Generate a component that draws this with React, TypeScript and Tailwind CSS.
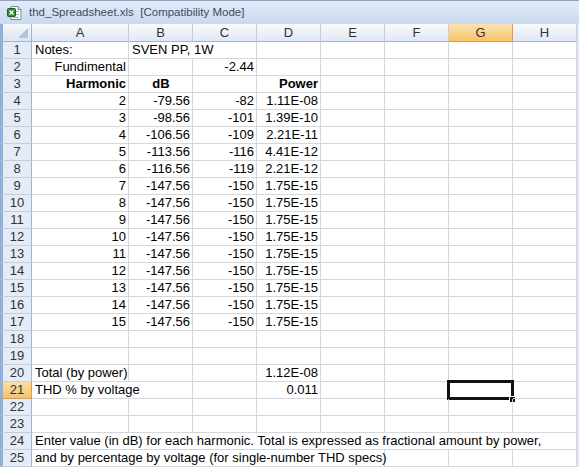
import React from "react";

type Cell = {
  text?: string;
  align?: "left" | "right" | "center";
  bold?: boolean;
  span?: number;
};

const cols = ["A", "B", "C", "D", "E", "F", "G", "H"];

const harmonics: [string, string, string, string][] = [
  ["2", "-79.56", "-82", "1.11E-08"],
  ["3", "-98.56", "-101", "1.39E-10"],
  ["4", "-106.56", "-109", "2.21E-11"],
  ["5", "-113.56", "-116", "4.41E-12"],
  ["6", "-116.56", "-119", "2.21E-12"],
  ["7", "-147.56", "-150", "1.75E-15"],
  ["8", "-147.56", "-150", "1.75E-15"],
  ["9", "-147.56", "-150", "1.75E-15"],
  ["10", "-147.56", "-150", "1.75E-15"],
  ["11", "-147.56", "-150", "1.75E-15"],
  ["12", "-147.56", "-150", "1.75E-15"],
  ["13", "-147.56", "-150", "1.75E-15"],
  ["14", "-147.56", "-150", "1.75E-15"],
  ["15", "-147.56", "-150", "1.75E-15"],
];

function fill(cells: Cell[]): Cell[] {
  const used = cells.reduce((n, c) => n + (c.span ?? 1), 0);
  return [...cells, ...Array.from({ length: 8 - used }, () => ({}))];
}

const rows: Cell[][] = [
  fill([{ text: "Notes:" }, { text: "SVEN PP, 1W", span: 2 }]),
  fill([{ text: "Fundimental", align: "right" }, {}, { text: "-2.44", align: "right" }]),
  fill([
    { text: "Harmonic", align: "right", bold: true },
    { text: "dB", align: "center", bold: true },
    {},
    { text: "Power", align: "right", bold: true },
  ]),
  ...harmonics.map((h) =>
    fill([
      { text: h[0], align: "right" },
      { text: h[1], align: "right" },
      { text: h[2], align: "right" },
      { text: h[3], align: "right" },
    ])
  ),
  fill([]),
  fill([]),
  fill([{ text: "Total (by power)" }, {}, {}, { text: "1.12E-08", align: "right" }]),
  fill([{ text: "THD % by voltage", span: 2 }, {}, { text: "0.011", align: "right" }]),
  fill([]),
  fill([]),
  fill([
    {
      text: "Enter value (in dB) for each harmonic. Total is expressed as fractional amount by power,",
      span: 8,
    },
  ]),
  fill([{ text: "and by percentage by voltage (for single-number THD specs)", span: 5 }]),
];

const spanClass: Record<number, string> = {
  1: "",
  2: "col-span-2",
  5: "col-span-5",
  8: "col-span-8",
};

function ExcelIcon() {
  return (
    <svg width="16" height="16" viewBox="0 0 16 16">
      <path d="M4 1.5h7l3 3v10H4z" fill="#fff" stroke="#7d8a99" />
      <path d="M11 1.5v3h3" fill="#e8edf3" stroke="#7d8a99" />
      <rect x="6" y="6" width="6" height="1" fill="#9ab88a" />
      <rect x="6" y="9" width="6" height="1" fill="#9ab88a" />
      <rect x="6" y="12" width="6" height="1" fill="#9ab88a" />
      <rect x="0.5" y="3.5" width="8" height="8" rx="1" fill="#2f8a3a" stroke="#1d5e25" />
      <path d="M2.5 5.5l4 4M6.5 5.5l-4 4" stroke="#fff" strokeWidth="1.4" />
    </svg>
  );
}

export default function App() {
  return (
    <div
      className="w-[579px] h-[468px] overflow-hidden bg-white text-black"
      style={{ fontFamily: '"Liberation Sans", Arial, sans-serif' }}
    >
      <div className="h-[24px] flex items-center gap-[6px] pl-[7px] border-t border-[#8aa2c6] bg-gradient-to-b from-[#e3ecf8] to-[#c9d9ef]">
        <ExcelIcon />
        <span className="text-[11.5px] text-[#3d4b60] whitespace-pre">
          thd_Spreadsheet.xls  [Compatibility Mode]
        </span>
      </div>

      <div className="flex">
        <div className="grid grid-cols-[32px_97px_repeat(7,64px)] grid-rows-[18px] auto-rows-[17px] text-[13px]">
          <div className="relative border-l-[3px] border-[#8fb0dc] border-r border-r-[#9eb6ce] border-b border-b-[#9eb6ce] bg-gradient-to-b from-[#f4f7fb] to-[#dde5f0]">
            <div className="absolute right-[3px] bottom-[3px] w-0 h-0 border-l-[10px] border-l-transparent border-b-[10px] border-b-[#b4c1d3]" />
          </div>
          {cols.map((c) => (
            <div
              key={c}
              className={
                c === "G"
                  ? "flex items-center justify-center border-r border-b border-[#f29536] bg-gradient-to-b from-[#fbe2b2] to-[#f3c46a] text-[#333] leading-none"
                  : "flex items-center justify-center border-r border-r-[#c3cfdf] border-b border-b-[#9eb6ce] bg-gradient-to-b from-[#f8fafd] to-[#e1e8f2] text-[#333] leading-none"
              }
            >
              {c}
            </div>
          ))}

          {rows.map((row, ri) => {
            const n = ri + 1;
            let col = 0;
            return (
              <React.Fragment key={n}>
                <div
                  className={
                    n === 21
                      ? "flex items-center justify-center border-l-[3px] border-l-[#8fb0dc] border-r border-r-[#f29536] border-b border-b-[#f29536] bg-gradient-to-b from-[#fbdfa8] to-[#f3c46a] text-[#333] leading-[16px]"
                      : "flex items-center justify-center border-l-[3px] border-l-[#8fb0dc] border-r border-r-[#9eb6ce] border-b border-b-[#c3cfdf] bg-[#e4ecf7] text-[#333] leading-[16px]"
                  }
                >
                  {n}
                </div>
                {row.map((cell, ci) => {
                  const start = col;
                  col += cell.span ?? 1;
                  const selected = n === 21 && start === 6;
                  const align =
                    cell.align === "right"
                      ? "text-right"
                      : cell.align === "center"
                      ? "text-center"
                      : "text-left";
                  return (
                    <div
                      key={ci}
                      className={`relative border-r border-b border-[#d0d7e5] pl-[3px] pr-[2px] leading-[16px] whitespace-nowrap ${align} ${
                        cell.bold ? "font-bold" : ""
                      } ${spanClass[cell.span ?? 1]}`}
                    >
                      {cell.text}
                      {selected && (
                        <>
                          <div className="absolute left-[-2px] top-[-2px] w-[67px] h-[20px] border-[3px] border-[#111]" />
                          <div className="absolute left-[60px] top-[14px] w-[7px] h-[7px] bg-[#111] border border-white" />
                        </>
                      )}
                    </div>
                  );
                })}
              </React.Fragment>
            );
          })}
        </div>
        <div className="w-[2px] bg-[#dfe6f0]" />
      </div>
    </div>
  );
}
